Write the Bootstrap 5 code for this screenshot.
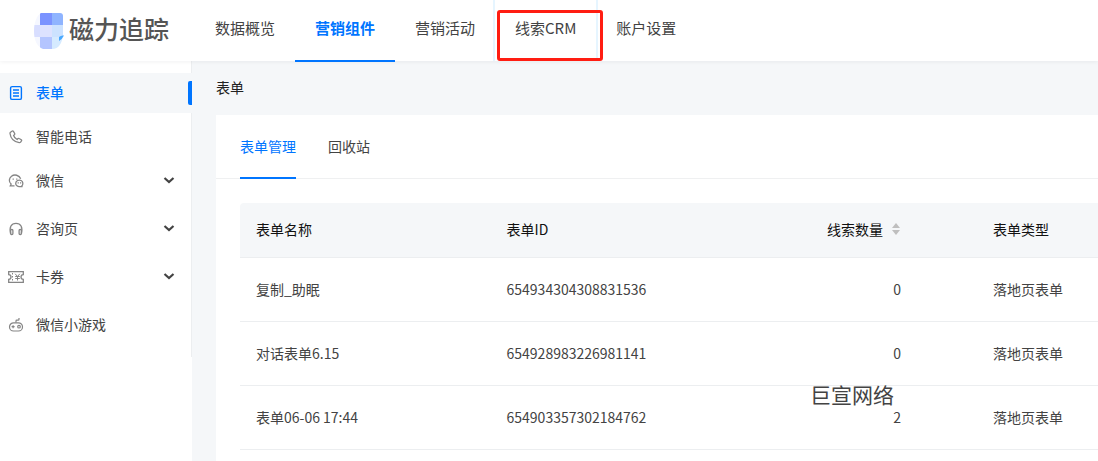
<!DOCTYPE html>
<html lang="zh-CN">
<head>
<meta charset="utf-8">
<meta name="viewport" content="width=device-width, initial-scale=1">
<title>磁力追踪</title>
<link href="https://cdn.jsdelivr.net/npm/bootstrap@5.3.0/dist/css/bootstrap.min.css" rel="stylesheet">
<style>
:root{--blue:#0075ff;--ink:#434343;--soft:#f5f7f9}
body{font:14px/22px "Noto Sans CJK SC",sans-serif;color:var(--ink);background:#fff;overflow-x:hidden}
a{color:inherit;text-decoration:none}
.topbar{height:61px;background:#fff;box-shadow:0 1px 4px rgba(0,21,41,.06);z-index:3}
.brand{width:195px;padding-left:34px;font-size:25px;line-height:30px;font-weight:500;color:#555;gap:5px}
.brand span{padding-bottom:5px}
.topnav{font-size:15px;line-height:24px}
.topnav a{display:block;padding:16px 20px 21px}
.topnav .on{color:var(--blue);font-weight:700}
.topnav .on::after{content:"";position:absolute;left:0;right:0;bottom:-1px;height:2px;background:var(--blue)}
.crm::before{content:"";position:absolute;left:-2px;right:-2px;top:0;height:61px;border:solid #e6f5ff;border-width:0 2px}
.marker{position:absolute;left:2px;right:-7px;top:10px;height:51px;border:3px solid #ff1d12;border-radius:3px;pointer-events:none}
.side{flex:0 0 192px;background:#fff}
.side-in{padding:12px 0;border-right:1px solid #eceef0}
.side ul{gap:4px}
.side a{height:40px;padding:0 16px 0 8px}
.side .grp{margin-bottom:4px}
.side .on{background:var(--soft);color:var(--blue);font-weight:500;margin-right:-1px}
.side .on::after{content:"";position:absolute;right:0;top:8px;width:4px;height:24px;background:var(--blue);border-radius:2px 0 0 2px}
.side svg{flex:none;color:#858585}
.side .on svg{color:var(--blue)}
.side .chev{color:#434343}
.side .lbl{margin-left:12px;padding-bottom:2px}
.work{background:var(--soft);padding:15px 0 0 24px;min-width:0}
.crumb{color:#222;margin-bottom:17px}
.panel{background:#fff}
.tabs{padding:0 24px;gap:32px;border-bottom:1px solid #eff0f1;height:64px}
.tabs a{height:64px;line-height:62px}
.tabs .on{color:var(--blue);border-bottom:2px solid var(--blue)}
.forms{table-layout:fixed;width:100%;border-collapse:separate;border-spacing:0}
.forms th{font-weight:400;color:#111;background:var(--soft);padding:15px 16px 17px;height:55px;border-bottom:1px solid #eceef0}
.forms th:first-child{border-top-left-radius:4px}
.forms td{padding:15px 16px 17px;height:64px;border-bottom:1px solid #eceef0}
.forms .num{text-align:right;padding-right:76px;position:relative}
.forms button{font:inherit;color:inherit;background:none;border:0;padding:0}
.stamp{position:absolute;right:83px;top:-6px;font-size:21px;line-height:28px;white-space:nowrap}
</style>
</head>
<body class="min-vh-100 d-flex flex-column">
<header class="topbar d-flex position-relative">
  <a href="#" class="brand d-flex align-items-center flex-shrink-0">
    <svg width="30" height="36" viewBox="0 0 30 36" aria-hidden="true"><defs><clipPath id="leaf"><path d="M7 0h19q3 0 3 3v19c-1 8-4 14-11 14H9C3 34 0 27 0 18S3 2 7 0z"/></clipPath></defs><g clip-path="url(#leaf)"><path fill="#f5f7ff" d="M0 0h6v36H0z"/><path fill="#7b93ff" d="M6 0h12v12H6z"/><path fill="#8fb4ff" d="M18 0h12v12H18z"/><path fill="#d8deff" d="M0 12h6v12H0z"/><path fill="#dde2ff" d="M6 12h12v12H6z"/><path fill="#cce2ff" d="M18 12h12v12H18z"/><path fill="#b4c5ff" d="M6 24h12v12H6z"/><path fill="#d5eaff" d="M18 24h12v12H18z"/></g><path fill="#49a9ff" d="M25 24q2-2 5-1.500-2 4-5 5.500z"/></svg>
    <span>磁力追踪</span></a>
  <nav><ul class="topnav list-unstyled d-flex m-0 text-nowrap">
    <li><a href="#">数据概览</a></li>
    <li class="position-relative"><a href="#" class="on">营销组件</a></li>
    <li><a href="#">营销活动</a></li>
    <li class="position-relative crm"><a href="#">线索CRM</a><span class="marker"></span></li>
    <li><a href="#">账户设置</a></li>
  </ul></nav>
</header>
<div class="d-flex flex-grow-1">
  <aside class="side"><div class="side-in"><ul class="list-unstyled d-flex flex-column m-0">
    <li><a href="#" class="on d-flex align-items-center position-relative"><svg width="16" height="16" viewBox="0 0 16 16" fill="none" stroke="currentColor" stroke-width="1.4"><rect x="2.600" y="1.600" width="10.800" height="12.800" rx="1.500"/><path d="M5 5h6M5 8h6M5 11h6"/></svg><span class="lbl">表单</span></a></li>
    <li><a href="#" class="d-flex align-items-center"><svg width="16" height="16" viewBox="0 0 16 16" fill="none" stroke="currentColor" stroke-width="1.300" stroke-linejoin="round"><path d="M2.500 3.200 4.300 2q.7-.3 1.100.3l1.300 2.200q.3.6-.2 1.100l-.9.9q.8 2.600 3.500 4l1-.9q.5-.4 1-.1l2.200 1.200q.6.4.3 1l-1 1.500q-.5.6-1.400.5Q3 12.300 2 4.500 1.900 3.700 2.500 3.200z"/></svg><span class="lbl">智能电话</span></a></li>
    <li class="grp"><a href="#" class="d-flex align-items-center"><svg width="16" height="16" viewBox="0 0 16 16" fill="none" stroke="currentColor" stroke-width="1.300"><path d="M6.500 12.800H2.300l.8-1.700C.6 9 .8 5.300 3.500 3.200c3-2.200 7.800-1.200 9.200 2.600"/><path d="M13.600 13.300c1.900-1.700 1.600-4.700-.5-5.800-2.400-1.200-5.200.2-5.400 2.700-.1 2.200 2 3.700 4.100 3.400h2.700z"/><path d="M4.600 6.200h1.200M8.200 6.200h1.200M9.600 9.800h1.200M12 9.800h1.200"/></svg><span class="lbl">微信</span><svg class="chev ms-auto" width="12" height="12" viewBox="0 0 12 12" fill="none" stroke="currentColor" stroke-width="2.200"><path d="m1.500 3 4.500 4 4.500-4"/></svg></a></li>
    <li class="grp"><a href="#" class="d-flex align-items-center"><svg width="16" height="16" viewBox="0 0 16 16" fill="none" stroke="currentColor" stroke-width="1.300"><path d="M2.600 12.500C1 6 3.300 2.300 8 2.300s7 3.700 5.400 10.200"/><rect x="2.600" y="8.500" width="2.300" height="5" rx="1"/><rect x="11.100" y="8.500" width="2.300" height="5" rx="1"/></svg><span class="lbl">咨询页</span><svg class="chev ms-auto" width="12" height="12" viewBox="0 0 12 12" fill="none" stroke="currentColor" stroke-width="2.200"><path d="m1.500 3 4.500 4 4.500-4"/></svg></a></li>
    <li class="grp"><a href="#" class="d-flex align-items-center"><svg width="16" height="16" viewBox="0 0 16 16" fill="none" stroke="currentColor" stroke-width="1.300"><path d="M.7 2.700h14.600v3a2.300 2.300 0 0 0 0 4.600v3H.7v-3a2.300 2.300 0 0 0 0-4.600z"/><path stroke-width="1" stroke-dasharray="1.500 1.500" d="M4.500 4v9"/><path stroke-width="1" d="m7.200 4.800 2.300 2.700 2.300-2.700M9.500 7.500v4M7.200 7.500h4.600M7.200 9.500h4.600"/></svg><span class="lbl">卡券</span><svg class="chev ms-auto" width="12" height="12" viewBox="0 0 12 12" fill="none" stroke="currentColor" stroke-width="2.200"><path d="m1.500 3 4.500 4 4.500-4"/></svg></a></li>
    <li><a href="#" class="d-flex align-items-center"><svg width="16" height="16" viewBox="0 0 16 16" fill="none" stroke="currentColor" stroke-width="1.200"><rect x="1.500" y="5.800" width="13" height="8.200" rx="4.100"/><path d="M8 5.500V4q0-.8.8-.8h1.400q.8 0 .8-1V1M3.600 9.700h3M5.100 8.200v3"/><circle cx="11" cy="9.700" r="1.300"/></svg><span class="lbl">微信小游戏</span></a></li>
  </ul></div></aside>
  <main class="work flex-grow-1 d-flex flex-column">
    <div class="crumb">表单</div>
    <section class="panel flex-grow-1">
      <nav class="tabs d-flex"><a href="#" class="on">表单管理</a><a href="#">回收站</a></nav>
      <div class="pt-4 ps-4">
        <table class="forms">
          <colgroup><col style="width:29.2%"><col style="width:28%"><col style="width:28.7%"><col></colgroup>
          <thead><tr><th>表单名称</th><th>表单ID</th><th class="num"><button type="button" class="d-inline-flex align-items-center gap-2">线索数量<svg width="10" height="14" viewBox="0 0 10 14" fill="#bfbfbf"><path d="M1 6 5 1l4 5zM1 8h8l-4 5z"/></svg></button></th><th>表单类型</th></tr></thead>
          <tbody>
            <tr><td>复制_助眠</td><td>654934304308831536</td><td class="num">0</td><td>落地页表单</td></tr>
            <tr><td>对话表单6.15</td><td>654928983226981141</td><td class="num">0</td><td>落地页表单</td></tr>
            <tr><td>表单06-06 17:44</td><td>654903357302184762</td><td class="num"><span class="stamp">巨宣网络</span>2</td><td>落地页表单</td></tr>
          </tbody>
        </table>
      </div>
    </section>
  </main>
</div>
</body>
</html>
